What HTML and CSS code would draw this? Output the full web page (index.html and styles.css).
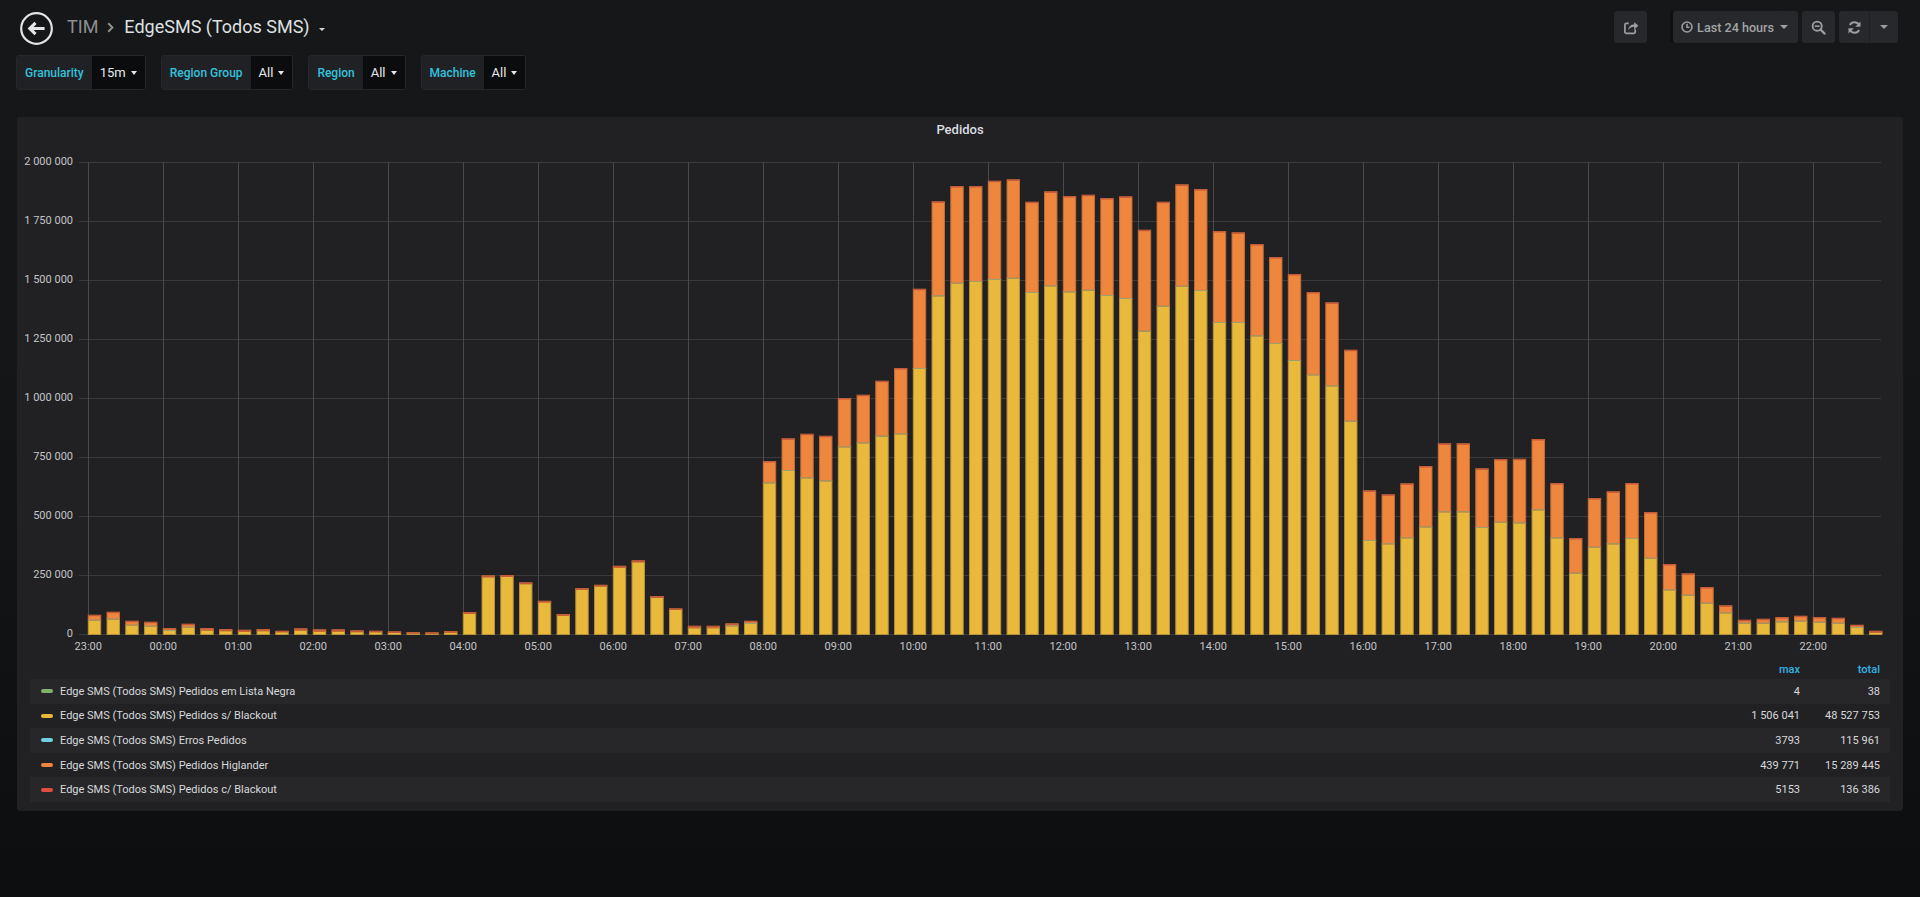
FILE: index.html
```html
<!DOCTYPE html>
<html lang="pt">
<head>
<meta charset="utf-8">
<title>EdgeSMS (Todos SMS)</title>
<link rel="stylesheet" href="styles.css">
</head>
<body>
<div class="navbar">
  <div class="nav-left">
    <button class="back-btn" aria-label="Voltar">
      <svg viewBox="0 0 33 33" width="33" height="33">
        <circle cx="16.5" cy="16.5" r="15.3" fill="none" stroke="currentColor" stroke-width="2.2"/>
        <path d="M7.6 16.5 L14.4 9.7 L16.6 11.9 L13.6 14.9 H24.6 V18.1 H13.6 L16.6 21.1 L14.4 23.3 Z" fill="currentColor"/>
      </svg>
    </button>
    <div class="crumbs">
      <span class="crumb-parent">TIM</span>
      <svg class="chev" viewBox="0 0 7 11" width="7" height="11"><path d="M1.2 1.2 L5.4 5.5 L1.2 9.8" fill="none" stroke="currentColor" stroke-width="2"/></svg>
      <span class="crumb-title">EdgeSMS (Todos SMS)</span>
      <span class="caret caret-title"></span>
    </div>
  </div>
  <div class="nav-right">
    <button class="nbtn nbtn-icon share-btn" aria-label="Share">
      <svg viewBox="0 0 16 16" width="16" height="16">
        <path d="M12.2 10.3v2.6a1.5 1.5 0 0 1-1.5 1.5H3.4a1.5 1.5 0 0 1-1.5-1.5V5.9a1.5 1.5 0 0 1 1.5-1.5h2.4" fill="none" stroke="currentColor" stroke-width="1.7"/>
        <path d="M5.4 11.2c0-3.8 2.6-5.7 5.8-5.7V3l4.2 3.7-4.2 3.7V7.8c-2.4 0-4.4 0.9-5.8 3.4z" fill="currentColor"/>
      </svg>
    </button>
    <button class="nbtn timepicker">
      <svg viewBox="0 0 12 12" width="12" height="12">
        <circle cx="6" cy="6" r="5" fill="none" stroke="currentColor" stroke-width="1.6"/>
        <path d="M6 2.8v3.5h2.5" fill="none" stroke="currentColor" stroke-width="1.5"/>
      </svg>
      <span class="tp-text">Last 24 hours</span>
      <span class="caret"></span>
    </button>
    <button class="nbtn nbtn-icon zoom-btn" aria-label="Zoom out">
      <svg viewBox="0 0 16 16" width="15" height="15">
        <circle cx="6.6" cy="6.6" r="4.9" fill="none" stroke="currentColor" stroke-width="2"/>
        <path d="M10.2 10.2l4.2 4.2" stroke="currentColor" stroke-width="2.6" stroke-linecap="round"/>
        <path d="M4 6.6h5.2" stroke="currentColor" stroke-width="1.8"/>
      </svg>
    </button>
    <div class="nbtn-group">
      <button class="nbtn nbtn-icon refresh-btn" aria-label="Refresh">
        <svg viewBox="0 0 16 16" width="15" height="15">
          <path d="M13.1 6.4A5.4 5.4 0 0 0 3.1 5.3" fill="none" stroke="currentColor" stroke-width="2.1"/>
          <path d="M14.4 1.6v5.6H8.8z" fill="currentColor"/>
          <path d="M2.9 9.6A5.4 5.4 0 0 0 12.9 10.7" fill="none" stroke="currentColor" stroke-width="2.1"/>
          <path d="M1.6 14.4V8.8h5.6z" fill="currentColor"/>
        </svg>
      </button>
      <button class="nbtn caret-btn" aria-label="Intervalo"><span class="caret"></span></button>
    </div>
  </div>
</div>

<div class="submenu">
  <div class="var">
    <span class="var-label">Granularity</span>
    <span class="var-value">15m <span class="caret caret-val"></span></span>
  </div>
  <div class="var">
    <span class="var-label">Region Group</span>
    <span class="var-value">All <span class="caret caret-val"></span></span>
  </div>
  <div class="var">
    <span class="var-label">Region</span>
    <span class="var-value">All <span class="caret caret-val"></span></span>
  </div>
  <div class="var">
    <span class="var-label">Machine</span>
    <span class="var-value">All <span class="caret caret-val"></span></span>
  </div>
</div>

<section class="panel">
  <div class="panel-title">Pedidos</div>
  <div class="chart">
    <svg id="chart" width="1886" height="517" viewBox="0 0 1886 517"></svg>
  </div>
  <div class="legend">
    <div class="legend-head">
      <span></span>
      <span class="lg-col">max</span>
      <span class="lg-col">total</span>
    </div>
    <div class="legend-row">
      <span class="lg-name"><i class="swatch sw-green"></i>Edge SMS (Todos SMS) Pedidos em Lista Negra</span>
      <span class="lg-val">4</span>
      <span class="lg-val">38</span>
    </div>
    <div class="legend-row">
      <span class="lg-name"><i class="swatch sw-yellow"></i>Edge SMS (Todos SMS) Pedidos s/ Blackout</span>
      <span class="lg-val">1 506 041</span>
      <span class="lg-val">48 527 753</span>
    </div>
    <div class="legend-row">
      <span class="lg-name"><i class="swatch sw-cyan"></i>Edge SMS (Todos SMS) Erros Pedidos</span>
      <span class="lg-val">3793</span>
      <span class="lg-val">115 961</span>
    </div>
    <div class="legend-row">
      <span class="lg-name"><i class="swatch sw-orange"></i>Edge SMS (Todos SMS) Pedidos Higlander</span>
      <span class="lg-val">439 771</span>
      <span class="lg-val">15 289 445</span>
    </div>
    <div class="legend-row">
      <span class="lg-name"><i class="swatch sw-red"></i>Edge SMS (Todos SMS) Pedidos c/ Blackout</span>
      <span class="lg-val">5153</span>
      <span class="lg-val">136 386</span>
    </div>
  </div>
</section>

<script src="script.js"></script>
</body>
</html>
```

FILE: styles.css
```css
* { box-sizing: border-box; }

html, body {
  margin: 0;
  height: 100%;
}

body {
  background: linear-gradient(180deg, #161719 0%, #151618 40%, #0d0e10 100%);
  font-family: Roboto, "Helvetica Neue", Arial, sans-serif;
  color: #d8d9da;
  overflow: hidden;
}

button {
  font: inherit;
  border: 0;
  padding: 0;
  margin: 0;
  cursor: pointer;
}

/* ---------- navbar ---------- */
.navbar {
  height: 55px;
  display: flex;
  justify-content: space-between;
  align-items: flex-start;
  padding: 11px 22px 0 20px;
}

.nav-left {
  display: flex;
  align-items: center;
  height: 34px;
}

.back-btn {
  width: 33px;
  height: 33px;
  background: transparent;
  color: #e4e5e6;
  display: flex;
  margin-top: 1px;
}

.crumbs {
  display: flex;
  align-items: center;
  margin-left: 14px;
  font-size: 18px;
  line-height: 21px;
  padding-bottom: 3px;
}

.crumb-parent { color: #8e8f91; }

.chev {
  color: #8e8f91;
  margin: 2px 10px 0 9px;
}

.crumb-title { color: #dfe0e1; }

.caret {
  display: inline-block;
  flex: none;
  width: 0;
  height: 0;
  border-left: 4px solid transparent;
  border-right: 4px solid transparent;
  border-top: 4px solid currentColor;
}

.caret-title {
  color: #d8d9da;
  border-left-width: 3px;
  border-right-width: 3px;
  border-top-width: 3px;
  margin: 5px 0 0 9px;
}

.nav-right {
  display: flex;
  align-items: center;
  height: 32px;
}

.nbtn {
  height: 32px;
  background: #27282b;
  color: #9c9d9f;
  border-radius: 3px;
  display: flex;
  align-items: center;
  justify-content: center;
  white-space: nowrap;
}

.nbtn-icon { width: 33px; }

.timepicker {
  margin-left: 26px;
  padding: 0 10px 0 8px;
  justify-content: flex-start;
  box-shadow: -3px 0 0 #0e0f11;
}

.timepicker svg { flex: none; }

.tp-text {
  margin-left: 4px;
  font-size: 12.6px;
  font-weight: 500;
  color: #a3a4a6;
}

.timepicker .caret { margin-left: 6px; }

.zoom-btn { margin-left: 4px; }

.nbtn-group {
  display: flex;
  margin-left: 4px;
}

.refresh-btn {
  width: 31px;
  border-radius: 3px 0 0 3px;
  border-right: 1px solid #1f2023;
}

.caret-btn {
  width: 28px;
  border-radius: 0 3px 3px 0;
}

/* ---------- submenu (template variables) ---------- */
.submenu {
  display: flex;
  gap: 15px;
  padding-left: 16px;
  height: 35px;
}

.var {
  display: flex;
  height: 35px;
  border: 1px solid #26272b;
  border-radius: 3px;
  overflow: hidden;
}

.var-label {
  display: flex;
  align-items: center;
  padding: 0 8px;
  background: #202125;
  color: #33c1dd;
  font-size: 12px;
  font-weight: 500;
}

.var-value {
  display: flex;
  align-items: center;
  padding: 0 8px;
  background: #0b0c0e;
  color: #e6e7e8;
  font-size: 13px;
}

.caret-val {
  color: #e6e7e8;
  border-left-width: 3px;
  border-right-width: 3px;
  border-top-width: 4px;
  margin-left: 5px;
}

/* ---------- panel ---------- */
.panel {
  margin: 27px 17px 0 17px;
  height: 694px;
  background: #212124;
  border-radius: 3px;
  display: flex;
  flex-direction: column;
}

.panel-title {
  height: 26px;
  line-height: 26px;
  text-align: center;
  font-size: 13px;
  font-weight: 500;
  color: #dcdde0;
}

.chart { height: 517px; }
.chart svg { display: block; }

.grid-h { stroke: #3a3a3d; stroke-width: 1; }
.grid-v { stroke: #4a4a4d; stroke-width: 1; }

.tick {
  font-family: Roboto, "Helvetica Neue", Arial, sans-serif;
  font-size: 11px;
  fill: #c4c5c7;
}

/* ---------- legend ---------- */
.legend {
  padding: 0 13px;
  font-size: 11px;
}

.legend-head,
.legend-row {
  display: grid;
  grid-template-columns: 1fr 80px 80px;
  align-items: center;
  padding-right: 10px;
}

.legend-head { height: 19px; }

.lg-col {
  text-align: right;
  color: #33b5e5;
  font-weight: 500;
}

.legend-row { height: 24.6px; }
.legend-row:nth-child(even) { background: #27272a; }

.lg-name {
  display: flex;
  align-items: center;
  padding-left: 11px;
  color: #d8d9da;
}

.lg-val {
  text-align: right;
  color: #d8d9da;
}

.swatch {
  display: inline-block;
  width: 12px;
  height: 4px;
  border-radius: 2px;
  margin-right: 7px;
}

.sw-green { background: #7eb26d; }
.sw-yellow { background: #eab839; }
.sw-cyan { background: #6ed0e0; }
.sw-orange { background: #ef843c; }
.sw-red { background: #e24d42; }

.bar-y { fill: #e8b93b; stroke: #b99236; stroke-width: 1; }
.bar-o { fill: #ef863d; stroke: #c56d34; stroke-width: 1; }
.bar-sep { fill: #9aa06e; }
.bar-top { fill: #c4513d; }
```

FILE: script.js
```javascript
(function () {
  var T = [19.3,22.3,13.3,12.3,6,10.3,6,5,4.3,5,3.3,5.7,4.7,4.7,3.7,3.3,2.7,2,1.7,3,
    22,58.7,59,51.7,33.3,20,46,49.3,68.3,73.7,38,25.7,8.3,8.3,10.7,13.3,173,195.7,200.3,198.3,
    236,239.3,253.3,266,345.3,432.7,448,448,453.3,454.7,432.3,442.7,438,439.3,436,437.7,404.3,432.3,449.7,445,
    403,401.7,390,377,360,342,331.7,284.3,143.7,139.7,150.7,168,190.7,190.7,165.7,175,175.3,195,151,96,
    136,142.7,151,122,70,60.7,47,28.7,14.3,15.3,17,18.3,17,16.3,9.3,3.3];
  var Y = [14.3,15.3,9.3,8.3,4,7.3,4.3,3.7,3,3.7,2.7,4,3,3,2.7,2.7,2,1.5,1.2,2,
    21,57.5,58,50.7,32.5,19.3,45,48.3,67,72.5,37,25,6.7,6.7,8.7,11,151.7,164,156.7,153.7,
    187.7,191.7,198.3,200.7,266,338.7,351.3,353,355,356.3,342,348.7,342.7,344.3,339,336,303.3,328.3,348.3,344,
    312,312,298.7,291,274,259.7,248.7,213.3,94,90.7,96.7,107.7,122.7,122.7,107,112.3,111.7,124.7,96.7,61.3,
    87.3,90.7,96,76.3,44.7,39.3,31.3,21.7,11.3,11.3,12.7,13.3,12.3,11.3,7,2];

  var NS = 'http://www.w3.org/2000/svg';
  var svg = document.getElementById('chart');

  function el(name, attrs, text) {
    var e = document.createElementNS(NS, name);
    for (var k in attrs) e.setAttribute(k, attrs[k]);
    if (text !== undefined) e.textContent = text;
    svg.appendChild(e);
    return e;
  }

  function fmt(n) {
    return String(n).replace(/\B(?=(\d{3})+(?!\d))/g, ' ');
  }

  var base = 491.5;
  var step = 58.96;
  var top = Math.round(base - 8 * step - 0.5) + 0.5;
  var left = 62, right = 1864;

  var k, y, h, x;
  for (k = 0; k <= 8; k++) {
    y = Math.round(base - k * step - 0.5) + 0.5;
    el('line', { x1: left, x2: right, y1: y, y2: y, 'class': 'grid-h' });
  }
  for (h = 0; h < 24; h++) {
    x = Math.round(71.3 + h * 75 - 0.5) + 0.5;
    el('line', { x1: x, x2: x, y1: top, y2: base, 'class': 'grid-v' });
  }

  for (var i = 0; i < T.length; i++) {
    var bx = 71.3 + i * 18.75, bw = 12.4;
    var t = T[i], yv = Y[i];
    el('rect', { x: bx, y: base - yv, width: bw, height: yv, 'class': 'bar-y' });
    if (t - yv > 0) {
      el('rect', { x: bx, y: base - t, width: bw, height: t - yv, 'class': 'bar-o' });
    }
    if (t - yv >= 2) {
      el('rect', { x: bx, y: base - yv - 0.5, width: bw, height: 1, 'class': 'bar-sep' });
    }
    el('rect', { x: bx, y: base - t, width: bw, height: 1, 'class': 'bar-top' });
  }

  for (k = 0; k <= 8; k++) {
    y = Math.round(base - k * step - 0.5) + 0.5;
    el('text', { x: 56, y: y + 2.5, 'text-anchor': 'end', 'class': 'tick' }, fmt(k * 250000));
  }
  for (h = 0; h < 24; h++) {
    x = 71.3 + h * 75;
    var hr = (23 + h) % 24;
    el('text', { x: x, y: base + 15.5, 'text-anchor': 'middle', 'class': 'tick' }, (hr < 10 ? '0' : '') + hr + ':00');
  }
})();
```
